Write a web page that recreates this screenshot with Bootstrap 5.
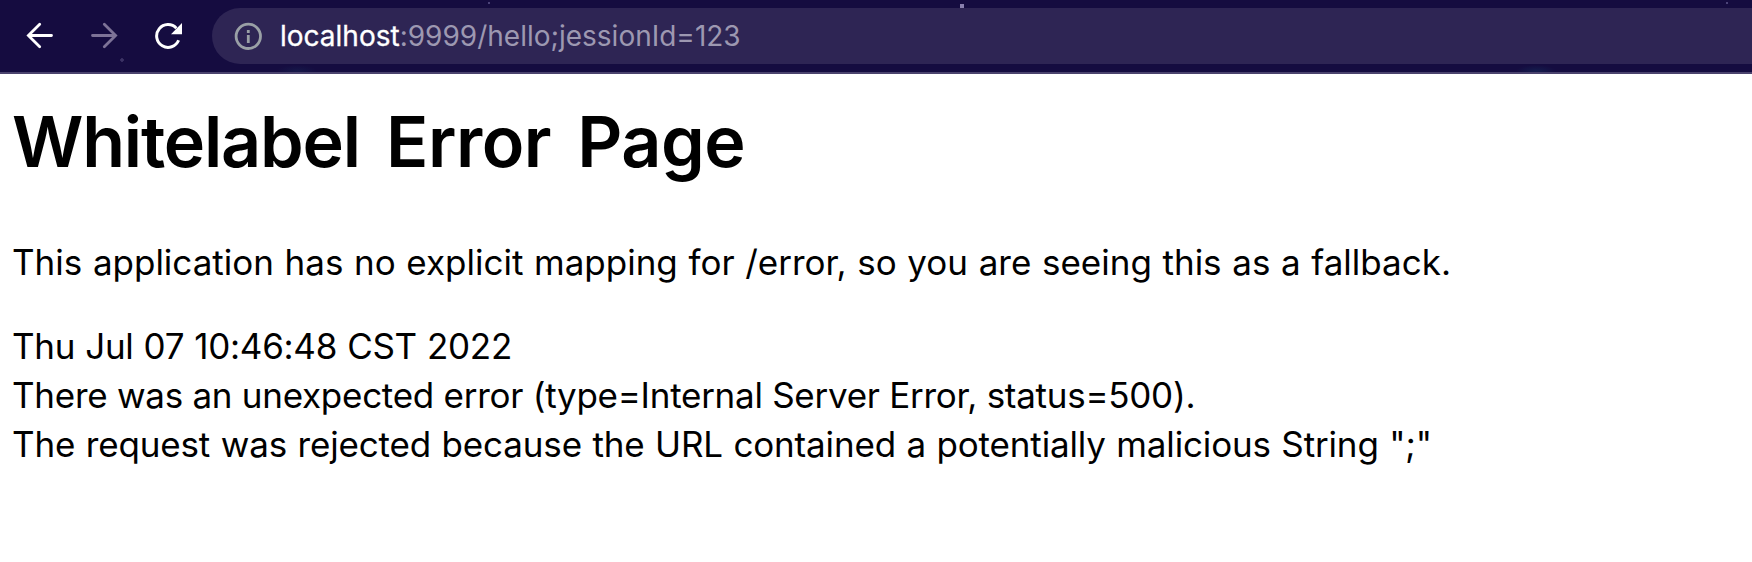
<!DOCTYPE html>
<html lang="en">
<head>
<meta charset="utf-8">
<meta name="viewport" content="width=device-width, initial-scale=1">
<title>Whitelabel Error Page</title>
<link href="https://cdn.jsdelivr.net/npm/bootstrap@5.3.0/dist/css/bootstrap.min.css" rel="stylesheet">
<style>
  body { font-family: Inter, "Liberation Sans", sans-serif; color: #000; }
  .toolbar {
    height: 74px; padding: 8px 0 8px 26px; border-bottom: 2px solid #4b436e;
    background:
      radial-gradient(circle at 122px 60px, #3b3264 0 1.5px, transparent 2px),
      radial-gradient(circle at 489px 3px, #4b4378 0 1px, transparent 1.5px),
      linear-gradient(#8980ae, #8980ae) 960px 4px / 4px 4px no-repeat,
      radial-gradient(circle at 1727px 3px, #4b4378 0 1px, transparent 1.5px),
      radial-gradient(ellipse 20px 6px at 1536px 71px, #151d4d, transparent),
      radial-gradient(ellipse 20px 6px at 297px 71px, #161849, transparent),
      #150c40;
  }
  .tool { width: 28px; height: 28px; flex: none; margin-right: 36px; }
  .address { height: 56px; margin-left: -6px; padding-left: 22px; border-radius: 28px 0 0 28px; background: #2e2554; }
  .info { width: 28px; height: 28px; flex: none; margin-right: 18px; }
  .url { font-size: 28px; line-height: 56px; color: #9d98b1; white-space: nowrap; }
  .host { color: #fff; -webkit-text-stroke: .3px #fff; }
  main { padding: 0 13px; }
  h1.title { font-size: 70px; font-weight: 600; line-height: 84px; letter-spacing: -.5px; word-spacing: 9px; margin: 26px 0 54px -1px; }
  .tight { letter-spacing: -1.2px; }
  .msg { font-size: 35px; line-height: 49px; white-space: nowrap; margin-left: -1px; }
  .msg.first { letter-spacing: 0; word-spacing: .8px; margin-bottom: 35px; }
  .stamp { letter-spacing: -.3px; word-spacing: .6px; }
  .kind { letter-spacing: -.27px; }
  .cause { letter-spacing: -.15px; word-spacing: .8px; }
</style>
<script src="https://cdn.jsdelivr.net/npm/bootstrap@5.3.0/dist/js/bootstrap.bundle.min.js"></script>
</head>
<body class="bg-white overflow-hidden">
<header class="toolbar d-flex align-items-center">
  <svg class="tool" viewBox="0 0 28 28" fill="none" stroke="#fff" stroke-width="2.8" stroke-linecap="round"><path d="M25.5 13.5H2.5M13.7 2.2 2.4 13.5l11.3 11.3"/></svg>
  <svg class="tool" viewBox="0 0 28 28" fill="none" stroke="#7d7397" stroke-width="2.8" stroke-linecap="round"><path d="M2.5 13.5h23M14.3 2.2l11.3 11.3-11.3 11.3"/></svg>
  <svg class="tool" viewBox="0 0 28 28"><path d="M24.6 18.3A11.4 11.4 0 1 1 22.4 6.2" fill="none" stroke="#fff" stroke-width="3"/><path d="M28 1v11.2H17z" fill="#fff"/></svg>
  <div class="address d-flex align-items-center flex-grow-1">
    <svg class="info" viewBox="0 0 28 28"><circle cx="14.3" cy="14.3" r="12.2" fill="none" stroke="#9aa0a6" stroke-width="2.8"/><path d="M12.9 8h2.8v2.9h-2.8zM12.9 13h2.8v8h-2.8z" fill="#9aa0a6"/></svg>
    <div class="url"><span class="host">localhost</span>:9999/hello;jessionId=123</div>
  </div>
</header>
<main>
  <h1 class="title"><span class="tight">Whitelabel</span> Error Page</h1>
  <p class="msg first">This application has no explicit mapping for /error, so you are seeing this as a fallback.</p>
  <div class="msg stamp">Thu Jul 07 10:46:48 CST 2022</div>
  <div class="msg kind">There was an unexpected error (type=Internal Server Error, status=500).</div>
  <div class="msg cause">The request was rejected because the URL contained a potentially malicious String ";"</div>
</main>
</body>
</html>
